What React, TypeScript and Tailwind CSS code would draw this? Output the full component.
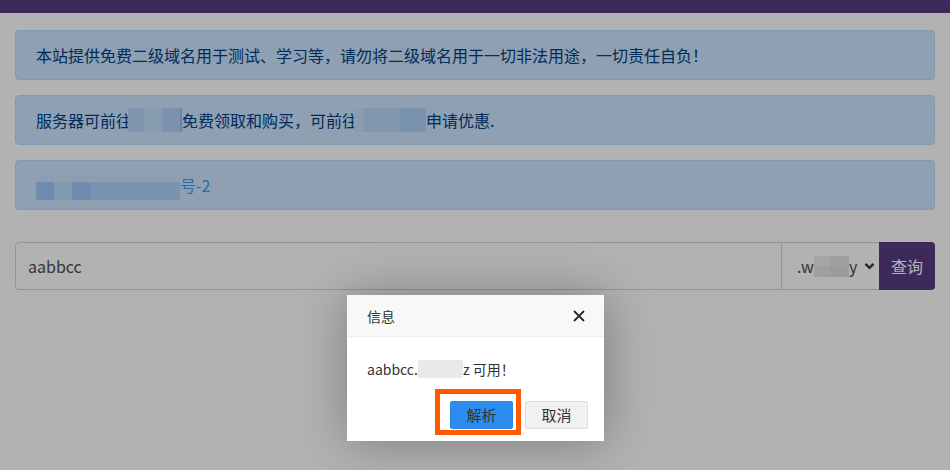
const font = { fontFamily: '"Microsoft YaHei", "Noto Sans CJK SC", sans-serif' };

function Mosaic({ cells, h }: { cells: { w: number; c: string }[]; h: string }) {
    return (
        <span className={`inline-flex align-middle ${h}`}>
            {cells.map((cell, i) => (
                <span key={i} className={cell.c} style={{ width: cell.w }} />
            ))}
        </span>
    );
}

export default function App() {
    return (
        <div className="relative w-full h-[470px] overflow-hidden bg-white" style={font}>
            {/* Navbar */}
            <div className="h-[13px] bg-[#593c86]" />

            <div className="px-[15px] pt-[17px]">
                {/* Alerts */}
                <div className="h-[50px] mb-[15px] flex items-center px-5 rounded border border-[#b8daff] bg-[#cce5ff] text-[#004085] text-base">
                    本站提供免费二级域名用于测试、学习等，请勿将二级域名用于一切非法用途，一切责任自负！
                </div>
                <div className="h-[50px] mb-[15px] flex items-center px-5 rounded border border-[#b8daff] bg-[#cce5ff] text-[#004085] text-base">
                    <span>服务器可前往</span>
                    <Mosaic
                        h="h-[24px] -ml-[4px]"
                        cells={[
                            { w: 16, c: 'bg-[#b3d6fb]' },
                            { w: 18, c: 'bg-[#c3e0fd]' },
                            { w: 18, c: 'bg-[#b0d3fa]' },
                            { w: 2, c: 'bg-[#97bde8]' },
                        ]}
                    />
                    <span>免费领取和购买，可前往</span>
                    <Mosaic
                        h="h-[24px] -ml-[4px]"
                        cells={[
                            { w: 10, c: 'bg-[#c4e1fe]' },
                            { w: 36, c: 'bg-[#b8d9fc]' },
                            { w: 26, c: 'bg-[#aed2fa]' },
                        ]}
                    />
                    <span>申请优惠.</span>
                </div>
                <div className="h-[50px] flex items-center px-5 rounded border border-[#b8daff] bg-[#cce5ff] text-base">
                    <span className="inline-flex flex-col h-[28px] w-[144px] mt-[1px]">
                        <span className="h-[10px] bg-[#c9e3fc]" />
                        <span className="flex h-[18px]">
                            <span className="w-[18px] bg-[#a0c8fc]" />
                            <span className="w-[18px] bg-[#badbff]" />
                            <span className="w-[18px] bg-[#a0c8fc]" />
                            <span className="w-[18px] bg-[#add4ff]" />
                            <span className="flex-1 bg-[#aed4fe]" />
                        </span>
                    </span>
                    <span className="text-[#3a9bff]">号-2</span>
                </div>

                {/* Search */}
                <div className="mt-[32px] flex h-[48px]">
                    <div className="flex-1 flex items-center pl-3 border border-[#ced4da] rounded-l text-base text-[#495057]">
                        aabbcc
                    </div>
                    <div className="w-[97px] flex items-center pl-[15px] pr-[4px] border-y border-[#ced4da] text-base text-[#495057]">
                        <span>.w</span>
                        <span className="inline-flex flex-col w-[35px] h-[21px]">
                            <span className="flex h-[10px]">
                                <span className="w-[17px] bg-[#ececec]" />
                                <span className="w-[18px] bg-[#e2e2e2]" />
                            </span>
                            <span className="flex h-[11px]">
                                <span className="w-[17px] bg-[#e4e4e4]" />
                                <span className="w-[18px] bg-[#dedede]" />
                            </span>
                        </span>
                        <span>y</span>
                        <svg className="ml-auto" width="11" height="8" viewBox="0 0 11 8">
                            <polyline points="1.5,1.8 5.5,5.8 9.5,1.8" fill="none" stroke="#343a40" strokeWidth="2.4" />
                        </svg>
                    </div>
                    <button className="w-[56px] bg-[#593c86] text-white text-base rounded-r">查询</button>
                </div>
            </div>

            {/* Shade */}
            <div className="absolute inset-0 bg-black/30" />

            {/* Dialog */}
            <div className="absolute left-[347px] top-[295px] w-[257px] bg-white shadow-[1px_1px_50px_rgba(0,0,0,0.3)]">
                <div className="h-[42px] flex items-center justify-between pl-5 pr-[19px] bg-[#f8f8f8] border-b border-[#eeeeee] text-sm text-[#333]">
                    <span>信息</span>
                    <svg width="12" height="12" viewBox="0 0 12 12">
                        <path d="M1 1 L11 11 M11 1 L1 11" stroke="#2a2a2a" strokeWidth="1.8" fill="none" />
                    </svg>
                </div>
                <div className="px-5 pt-5 pb-5 text-sm leading-6 text-[#333] flex items-center">
                    <span>aabbcc.</span>
                    <span className="inline-block w-[45px] h-[18px] bg-[#e9e9e9]" />
                    <span>z 可用！</span>
                </div>
                <div className="flex justify-end gap-[12px] pr-[16px] pb-[12px]">
                    <button className="w-[63px] h-[28px] rounded-[2px] bg-[#2d8cf0] border border-[#2a86e6] text-[15px] text-[#333]">
                        解析
                    </button>
                    <button className="w-[63px] h-[28px] rounded-[2px] bg-[#f1f1f1] border border-[#dedede] text-[15px] text-[#333]">
                        取消
                    </button>
                </div>
                <div className="absolute left-[88px] top-[94px] w-[86px] h-[46px] border-[5px] border-[#ff5a00]" />
            </div>
        </div>
    );
}
